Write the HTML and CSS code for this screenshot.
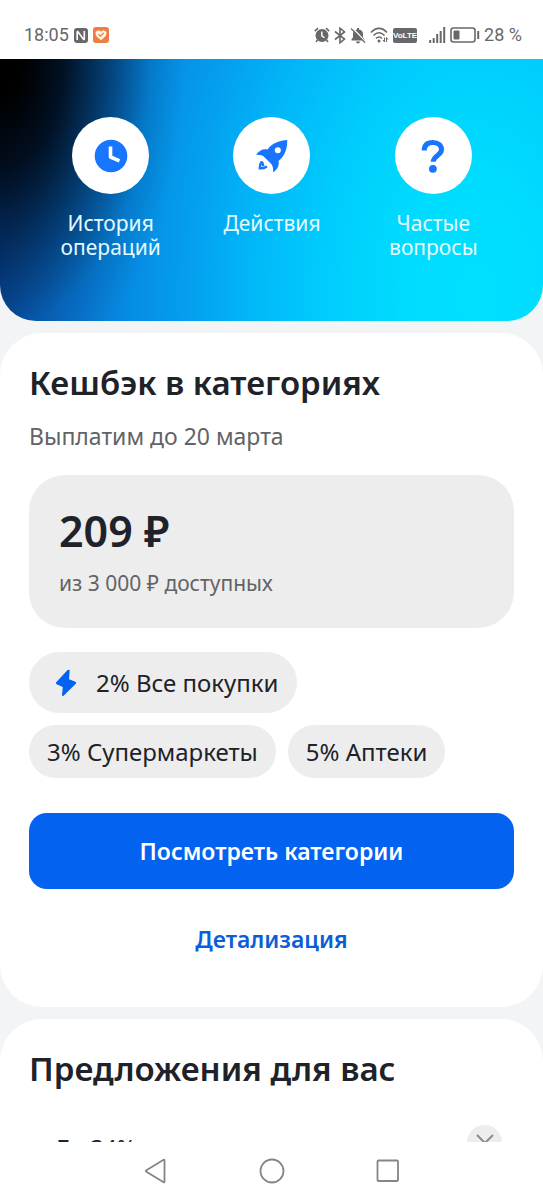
FILE: index.html
```html
<!DOCTYPE html>
<html lang="ru">
<head>
<meta charset="utf-8">
<meta name="viewport" content="width=device-width, initial-scale=1">
<title>Кешбэк</title>
<link rel="stylesheet" href="styles.css">
</head>
<body>
<div class="screen">
  <header class="status">
    <div class="status-group">
      <span class="status-text">18:05</span>
      <svg width="14" height="15" viewBox="0 0 14 15"><rect width="14" height="15" rx="3" fill="#68686a"/><path d="M3.200 12V4.200q0-1.200.9-.3l5.200 7.200q1 .8 1-.3V3" fill="none" stroke="#fff" stroke-width="1.600"/></svg>
      <svg width="16" height="16" viewBox="0 0 16 16"><rect width="16" height="16" rx="3" fill="#ed7d45"/><path d="M8 13.200C4.500 10.600 2.500 8.800 2.500 6.300 2.500 3.200 6.500 2.500 8 4.800c1.500-2.300 5.500-1.600 5.500 1.500 0 2.500-2 4.300-5.500 6.900z" fill="#fff3e4"/><path d="M5.500 7.200l2 2 3.300-3.300" fill="none" stroke="#ed7d45" stroke-width="1.300"/></svg>
    </div>
    <div class="status-group status-right">
      <svg width="16" height="16" viewBox="0 0 16 16"><circle cx="8" cy="8.500" r="6.500" fill="#68686a"/><path d="M.8 4.200L4 1.200M15.200 4.200L12 1.200M3.500 13l-1.500 2M12.500 13l1.500 2" stroke="#68686a" stroke-width="1.600"/><path d="M7.800 4.500v4.300l2.700 2" fill="none" stroke="#fff" stroke-width="1.400"/></svg>
      <svg width="12" height="17" viewBox="0 0 12 17"><path d="M1 4.500l9.500 7.500L6 15.800V1.200L10.500 5 1 12.500" fill="none" stroke="#68686a" stroke-width="1.600"/></svg>
      <svg width="16" height="17" viewBox="0 0 16 17"><path d="M1.500 13.500V12L3 10.500V7c0-2.500 1.500-4 4-4.500V1h2v1.500c2.500.5 4 2 4 4.500v3.500l1.500 1.500v1.500zM6 14.500h4a2 2 0 0 1-4 0z" fill="#68686a"/><path d="M2.500 1l13 14" stroke="#fff" stroke-width="1.600"/><path d="M1 1.500l14 14" stroke="#68686a" stroke-width="1.300"/></svg>
      <svg width="19" height="16" viewBox="0 0 19 16"><path d="M1 5.500C6 0 12 0 17 5.500M3.500 8.500C7 5 11 5 14.500 8.500M6 11.500c2-2 4-2 6 0" fill="none" stroke="#68686a" stroke-width="1.600"/><circle cx="9" cy="14" r="1.500" fill="#68686a"/><path d="M14.500 10.500v4.500l-1.500-2M16.500 15v-4.500l1.500 2" fill="none" stroke="#68686a"/></svg>
      <span class="volte">VoLTE</span>
      <svg class="signal" width="17" height="16" viewBox="0 0 17 16"><path d="M1.200 16v-3M4.700 16v-5M8.200 16V7M11.700 16V4M15.200 16V0" stroke="#68686a" stroke-width="2"/></svg>
      <svg width="30" height="16" viewBox="0 0 30 16"><rect x="1" y="1" width="24" height="14" rx="2.500" fill="none" stroke="#68686a" stroke-width="1.600"/><rect x="3.500" y="3.500" width="6" height="9" rx="1" fill="#68686a"/><path d="M28.200 4v8" stroke="#68686a" stroke-width="2"/></svg>
      <span class="status-text">28 %</span>
    </div>
  </header>

  <main class="feed">
    <nav class="hero" aria-label="Быстрые действия">
      <a class="action" href="#history">
        <span class="action-icon"><svg width="34" height="34" viewBox="0 0 34 34"><circle cx="17" cy="17" r="16.300" fill="#1775ff"/><path d="M16.500 7.500v10.500l9 3.800" fill="none" stroke="#fff" stroke-width="3.600" stroke-linejoin="round"/></svg></span>
        <span class="action-label">История операций</span>
      </a>
      <a class="action" href="#actions">
        <span class="action-icon"><svg width="34" height="34" viewBox="0 0 34 34"><path d="M32.200 1C25 1.200 17 4 12.500 10.500 8 9.500 4 11.500 1 15.800c3.500-.3 6.500.4 8.500 2.400l6.800 6.800c1.600 2 2.200 5 1.700 8.500 4.500-3 6.500-7 5.500-11.500C30 17 32.500 9 32.200 1z" fill="#1775ff"/><circle cx="22.800" cy="11.200" r="3" fill="#fff"/><path d="M6.800 22.500C5.200 24.500 4.800 27 4.800 29.400c2.800 0 5-.5 7.200-2M7 22.500l1.300 4.600" fill="none" stroke="#1775ff" stroke-width="2.400"/></svg></span>
        <span class="action-label">Действия</span>
      </a>
      <a class="action" href="#faq">
        <span class="action-icon"><svg width="34" height="34" viewBox="0 0 34 34"><path d="M8.200 11.500C8.200 6 11.500 3.400 16.800 3.400s8.700 3 8.700 7.200c0 6-8.200 5.800-8.200 12.200" fill="none" stroke="#1775ff" stroke-width="5"/><circle cx="16.900" cy="29.800" r="3.900" fill="#1775ff"/></svg></span>
        <span class="action-label">Частые вопросы</span>
      </a>
    </nav>

    <section class="card">
      <h2 class="title">Кешбэк в категориях</h2>
      <p class="subtitle">Выплатим до 20 марта</p>
      <div class="balance">
        <p class="amount">209 ₽</p>
        <p class="limit">из 3 000 ₽ доступных</p>
      </div>
      <ul class="chips">
        <li class="chip chip-main"><svg width="24" height="28" viewBox="0 0 24 28"><path d="M13.600 1L2.200 13.200q-1 1.300.4 2.100L8.800 18 8 26.300q.2 1.200 1.300.6L21.800 14.800q1-1.300-.4-2.100L15 10.300 15.700 1.600Q15.300.1 13.600 1z" fill="#0362f0"/></svg>2% Все покупки</li>
        <li class="chip">3% Супермаркеты</li>
        <li class="chip">5% Аптеки</li>
      </ul>
      <button class="primary" type="button">Посмотреть категории</button>
      <a class="details" href="#details">Детализация</a>
    </section>

    <section class="card">
      <h2 class="title">Предложения для вас</h2>
      <div class="offer">
        <span class="offer-name">До 34%</span>
        <button class="close" type="button" aria-label="Скрыть"><svg width="18" height="18" viewBox="0 0 18 18"><path d="M1 1l16 16M17 1L1 17" stroke="#8b8b8d" stroke-width="2"/></svg></button>
      </div>
    </section>
  </main>

  <footer class="navbar">
    <button class="nav-button" type="button" aria-label="Назад"><svg width="26" height="26" viewBox="0 0 26 26"><path d="M21.500 2.300v21.400q0 1-.9.500L3.400 13.700q-1.200-.7 0-1.400L20.600 1.800q.9-.5.900.5z" fill="none" stroke="#858585" stroke-width="1.800"/></svg></button>
    <button class="nav-button" type="button" aria-label="Домой"><svg width="26" height="26" viewBox="0 0 26 26"><circle cx="13" cy="13" r="11.500" fill="none" stroke="#858585" stroke-width="1.800"/></svg></button>
    <button class="nav-button" type="button" aria-label="Недавние"><svg width="26" height="26" viewBox="0 0 26 26"><rect x="2.500" y="2.500" width="20.500" height="20.500" rx="1" fill="none" stroke="#858585" stroke-width="1.800"/></svg></button>
  </footer>
</div>
</body>
</html>
```
FILE: styles.css
```css
* { box-sizing: border-box; }

body {
  margin: 0;
  font-family: "Noto Sans", sans-serif;
  color: #202229;
  background: #fff;
}

h2, p, ul { margin: 0; padding: 0; }

button { border: 0; padding: 0; font: inherit; cursor: pointer; }

a { text-decoration: none; }

svg { display: block; flex: none; }

.screen {
  display: flex;
  flex-direction: column;
  height: 100vh;
}

.status {
  display: flex;
  flex: none;
  justify-content: space-between;
  padding: 23px 21px 12px 24px;
  color: #68686a;
}

.status-group { display: flex; align-items: center; gap: 5px; }
.status-right { gap: 4px; }

.status-text {
  font-family: Roboto, sans-serif;
  font-size: 18px;
  line-height: 24px;
}

.volte {
  border-radius: 2px;
  background: #68686a;
  color: #fff;
  font: 700 8px/15px "Liberation Sans", sans-serif;
}

.signal { margin-left: 8px; }

.feed {
  display: flex;
  flex: 1;
  flex-direction: column;
  gap: 12px;
  min-height: 0;
  overflow: hidden;
  background: #f3f4f6;
}

.feed > * { flex: none; }

.hero {
  display: grid;
  grid-template-columns: repeat(3, 1fr);
  padding: 58px 29px 62px 30px;
  border-radius: 0 0 36px 36px;
  background:
    radial-gradient(ellipse 34% 125% at 0 0, #000 12%, rgba(0, 3, 10, .86) 34%, rgba(0, 14, 36, .5) 60%, rgba(0, 30, 70, .15) 82%, rgba(0, 40, 90, 0) 100%),
    radial-gradient(ellipse 88% 300% at 88% 90%, #00e0ff 0%, #00dcff 15%, #00cdfd 32%, #02b6f8 48%, #04a0ef 60%, #068ae2 74%, #0870cc 87%, #0850a8 100%);
}

.action {
  display: flex;
  flex-direction: column;
  align-items: center;
  gap: 17px;
  color: #e6fbff;
}

.action-icon {
  display: grid;
  place-items: center;
  width: 77px;
  height: 77px;
  border-radius: 50%;
  background: #fff;
}

.action-label {
  width: min-content;
  font-size: 21px;
  line-height: 24px;
  text-align: center;
}

.card {
  display: flex;
  flex-direction: column;
  padding: 29px;
  border-radius: 42px;
  background: #fff;
}

.title {
  font-size: 33px;
  font-weight: 600;
  line-height: 42px;
}

.subtitle {
  margin-top: 16px;
  color: #626366;
  font-size: 23px;
  line-height: 32px;
}

.balance {
  margin-top: 23px;
  padding: 28px 30px 30px;
  border-radius: 36px;
  background: #ededed;
}

.amount {
  font-size: 43px;
  font-weight: 600;
  line-height: 56px;
}

.limit {
  margin-top: 9px;
  color: #626366;
  font-size: 21px;
  line-height: 30px;
}

.chips {
  display: flex;
  flex-wrap: wrap;
  gap: 12px;
  margin-top: 24px;
  padding-right: 60px;
  list-style: none;
}

.chip {
  display: flex;
  align-items: center;
  padding: 10px 18px;
  border-radius: 32px;
  background: #ededed;
  font-size: 24px;
  line-height: 33px;
}

.chip-main { gap: 18px; padding: 14px 18px 14px 25px; }

.primary {
  margin-top: 35px;
  padding: 22px;
  border-radius: 18px;
  background: #0362f0;
  color: #fff;
  font-size: 23px;
  font-weight: 600;
  line-height: 32px;
}

.details {
  margin: 34px 0 23px;
  color: #0a5fd8;
  font-size: 23px;
  font-weight: 600;
  line-height: 32px;
  text-align: center;
}

.offer {
  display: flex;
  align-items: flex-start;
  justify-content: space-between;
  padding: 35px 12px 0 25px;
}

.offer-name { padding-top: 7px; font-size: 23px; line-height: 32px; }

.close {
  display: grid;
  place-items: center;
  width: 35px;
  height: 35px;
  border-radius: 50%;
  background: #ededed;
}

.navbar {
  display: flex;
  flex: none;
  justify-content: center;
  gap: 90px;
  padding: 16px;
  background: #fff;
}

.nav-button { background: none; }
```
